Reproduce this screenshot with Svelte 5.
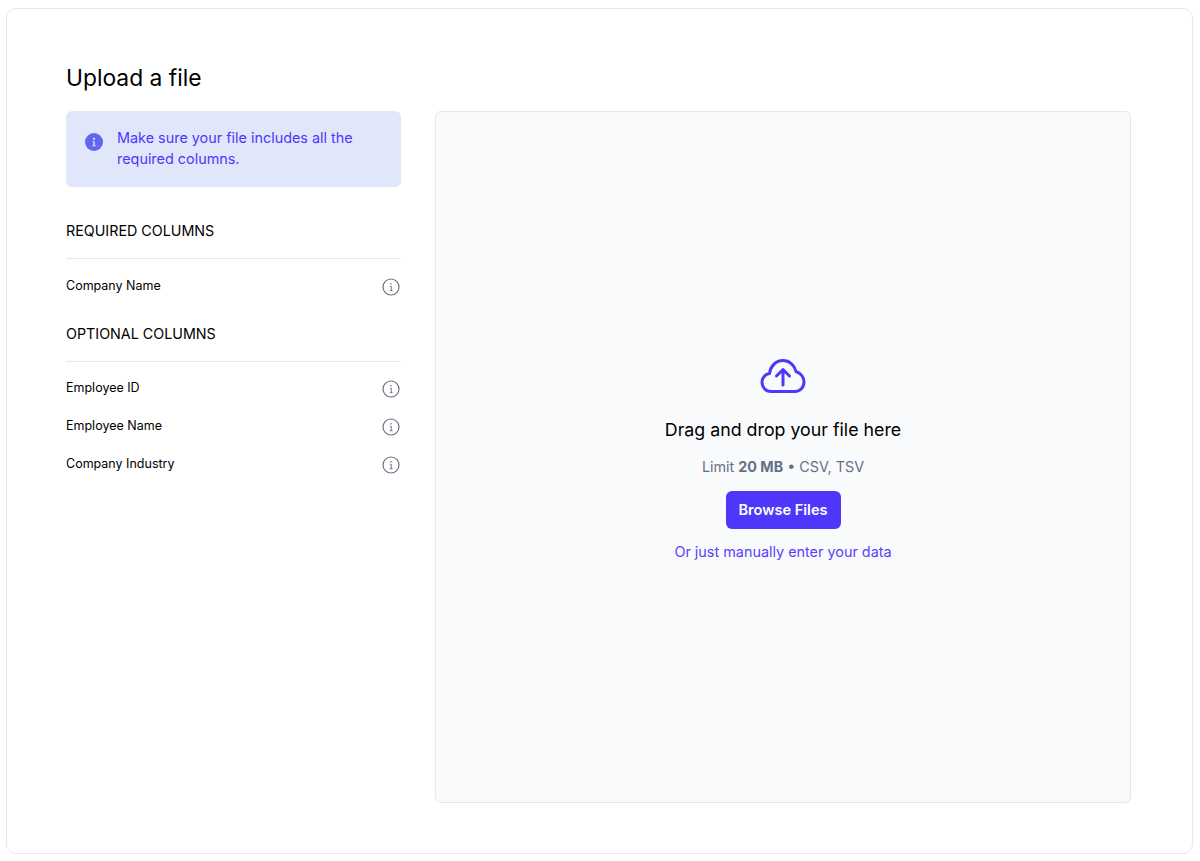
<script>
  const required = ['Company Name'];
  const optional = ['Employee ID', 'Employee Name', 'Company Industry'];
</script>

{#snippet info()}
  <svg class="info" viewBox="0 0 18 18" width="18" height="18" fill="none" aria-hidden="true">
    <circle cx="9" cy="9" r="8" stroke="#6b7280" stroke-width="1.2" />
    <circle cx="9" cy="5.7" r="0.8" fill="#6b7280" />
    <path d="M8 8.2h1.2v4.4M7.8 12.7h2.8" stroke="#6b7280" stroke-width="1" />
  </svg>
{/snippet}

{#snippet rows(items)}
  <ul class="rows">
    {#each items as item}
      <li><span>{item}</span>{@render info()}</li>
    {/each}
  </ul>
{/snippet}

<div class="page">
  <main class="card">
    <h1>Upload a file</h1>
    <div class="layout">
      <aside>
        <div class="alert">
          <svg viewBox="0 0 18 18" width="18" height="18" aria-hidden="true">
            <circle cx="9" cy="9" r="9" fill="#6366f1" />
            <circle cx="9" cy="5.8" r="1.1" fill="#e0e7ff" />
            <path d="M7.6 8.3h2.1v4h.9v1H7.5v-1h.9v-3h-.8z" fill="#e0e7ff" />
          </svg>
          <p>Make sure your file includes all the required columns.</p>
        </div>
        <h2 class="first">REQUIRED COLUMNS</h2>
        {@render rows(required)}
        <h2 class="second">OPTIONAL COLUMNS</h2>
        {@render rows(optional)}
      </aside>
      <section class="drop">
        <svg class="cloud" viewBox="0 0 46 36" width="46" height="36" fill="none" stroke="#4f36fb" stroke-width="3" stroke-linecap="round" stroke-linejoin="round" aria-hidden="true">
          <path d="M11 33.500C5.500 33.500 2 29 2 24.500 2 19.500 5.500 16 9.500 15.500 10.500 8 16 2.500 23 2.500 29.500 2.500 34.500 7 36 13.500 40.500 15 44 19 44 24 44 29.500 40 33.500 35 33.500Z" />
          <path d="M23 27V12M16.500 18 23 11.500 29.500 18" />
        </svg>
        <h3>Drag and drop your file here</h3>
        <p class="limit">Limit <b>20 MB</b> • CSV, TSV</p>
        <button type="button">Browse Files</button>
        <a href="#manual">Or just manually enter your data</a>
      </section>
    </div>
  </main>
</div>

<style>
  :global(body) {
    margin: 0;
    background: #fff;
    font-family: Inter, "Liberation Sans", sans-serif;
    color: #000;
  }
  .page {
    padding: 8px 7px 7px 6px;
    height: 861px;
    box-sizing: border-box;
  }
  .card {
    height: 846px;
    box-sizing: border-box;
    border: 1px solid #e5e7eb;
    border-radius: 10px;
    padding: 52px 60px 50px 59px;
    display: flex;
    flex-direction: column;
  }
  h1 {
    margin: 0 0 17px;
    font-size: 22.800px;
    line-height: 33px;
    font-weight: 400;
  }
  .layout {
    flex: 1;
    display: grid;
    grid-template-columns: 335px 696px;
    gap: 34px;
    min-height: 0;
  }
  .alert {
    height: 76px;
    box-sizing: border-box;
    background: #e0e7fb;
    border-radius: 6px;
    padding: 16px 20px 0 19px;
    display: flex;
    gap: 14px;
    color: #4f36fb;
  }
  .alert svg {
    flex: none;
    margin-top: 6px;
  }
  .alert p {
    margin: 0;
    font-size: 14.400px;
    line-height: 21px;
  }
  h2 {
    margin: 0;
    font-size: 14.300px;
    line-height: 18px;
    font-weight: 400;
    padding-bottom: 18px;
    border-bottom: 1px solid #e5e7eb;
  }
  h2.first {
    margin-top: 35px;
    margin-bottom: 1px;
  }
  h2.second {
    margin-top: 19px;
  }
  .rows {
    list-style: none;
    margin: 0;
    padding: 8px 0 0;
  }
  .rows li {
    height: 38px;
    display: flex;
    align-items: center;
    justify-content: space-between;
    font-size: 12.500px;
    padding-right: 1px;
  }
  .rows li span {
    margin-top: -3px;
  }
  .drop {
    background: #f9fafc;
    border: 1px solid #e5e7eb;
    border-radius: 6px;
    display: flex;
    flex-direction: column;
    align-items: center;
    padding-top: 246px;
    box-sizing: border-box;
    height: 692px;
  }
  .cloud {
    display: block;
  }
  h3 {
    margin: 24px 0 0;
    font-size: 17.800px;
    line-height: 24px;
    font-weight: 400;
  }
  .limit {
    margin: 15px 0 0;
    font-size: 14.350px;
    line-height: 20px;
    color: #667085;
  }
  .limit b {
    font-weight: 700;
  }
  button {
    margin-top: 14px;
    width: 115px;
    height: 38px;
    border: 0;
    border-radius: 6px;
    background: #4f36fb;
    color: #fff;
    font: 600 14.600px/20px Inter, "Liberation Sans", sans-serif;
  }
  a {
    margin-top: 13px;
    font-size: 14.400px;
    line-height: 20px;
    color: #5b3ffb;
    text-decoration: none;
  }
</style>
